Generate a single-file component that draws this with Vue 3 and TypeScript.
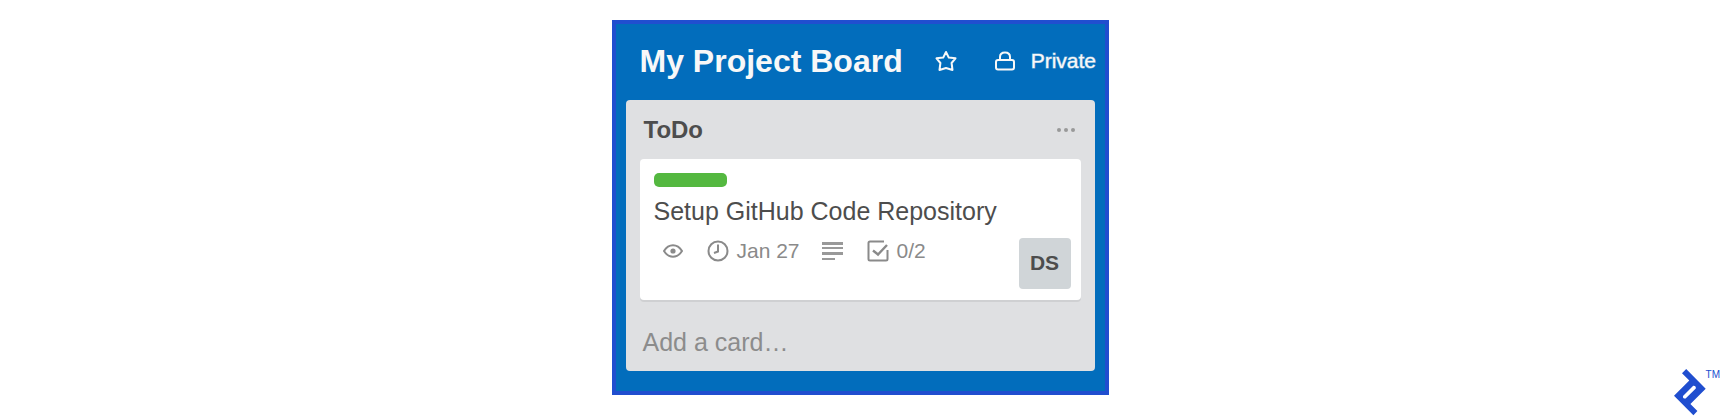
<script setup lang="ts">
interface Card {
  title: string
  due: string
  checklist: string
  member: string
}

const board = { title: 'My Project Board', visibility: 'Private' }
const list = { title: 'ToDo' }
const cards: Card[] = [
  { title: 'Setup GitHub Code Repository', due: 'Jan 27', checklist: '0/2', member: 'DS' },
]
</script>

<template>
  <main class="page">
    <section class="board">
      <header class="board-header">
        <h1 class="board-title">{{ board.title }}</h1>
        <button class="icon-button star" type="button" aria-label="Star board">
          <svg width="22" height="22" viewBox="0 0 22 22" fill="none" stroke="currentColor" stroke-width="2" stroke-linejoin="round">
            <path d="M11 2 L13.8 7.600 L20.500 8.300 L16.600 13 L17.500 20 L11 18 L4.500 20 L5.400 13 L1.500 8.300 L8.200 7.600 Z" />
          </svg>
        </button>
        <button class="icon-button privacy" type="button">
          <svg width="20" height="20" viewBox="0 0 20 20" fill="none" stroke="currentColor" stroke-width="2">
            <rect x="1" y="9" width="18" height="9.500" rx="2" />
            <path d="M5 9 V6 Q5 1.500 10 1.500 Q15 1.500 15 6 V9" />
          </svg>
          <span>{{ board.visibility }}</span>
        </button>
      </header>

      <section class="list">
        <header class="list-header">
          <h2 class="list-title">{{ list.title }}</h2>
          <button class="icon-button menu" type="button" aria-label="List actions">
            <svg width="18" height="4" viewBox="0 0 18 4" fill="currentColor">
              <rect x="0" y="0" width="4" height="4" rx="2" />
              <rect x="7" y="0" width="4" height="4" rx="2" />
              <rect x="14" y="0" width="4" height="4" rx="2" />
            </svg>
          </button>
        </header>

        <article v-for="card in cards" :key="card.title" class="card">
          <div class="label"></div>
          <h3 class="card-title">{{ card.title }}</h3>
          <div class="card-footer">
            <div class="badges">
              <span class="badge watch">
                <svg width="20" height="14" viewBox="0 0 20 14" fill="none" stroke="currentColor" stroke-width="2">
                  <path d="M1 7 Q4.500 1.300 10 1.300 Q15.500 1.300 19 7 Q15.500 12.700 10 12.700 Q4.500 12.700 1 7 Z" />
                  <circle cx="10" cy="7" r="2.600" fill="currentColor" stroke="none" />
                </svg>
              </span>
              <span class="badge due">
                <svg width="22" height="22" viewBox="0 0 22 22" fill="none" stroke="currentColor" stroke-width="2">
                  <circle cx="11" cy="11" r="9.500" />
                  <path d="M11 4.500 V11.500 L7 13" />
                </svg>
                {{ card.due }}
              </span>
              <span class="badge description">
                <svg width="21" height="20" viewBox="0 0 21 20" fill="currentColor">
                  <rect x="0" y="1" width="21" height="3" />
                  <rect x="0" y="6" width="21" height="2" />
                  <rect x="0" y="11" width="21" height="3" />
                  <rect x="0" y="17" width="13" height="2" />
                </svg>
              </span>
              <span class="badge checklist">
                <svg width="22" height="22" viewBox="0 0 22 22" fill="none" stroke="currentColor" stroke-width="2">
                  <path d="M17 1.500 H3 Q1.500 1.500 1.500 3 V19 Q1.500 20.500 3 20.500 H19 Q20.500 20.500 20.500 19 V10" />
                  <path d="M6 10.500 L11 14.500 L20 5" stroke-width="2.400" />
                </svg>
                {{ card.checklist }}
              </span>
            </div>
            <span class="member">{{ card.member }}</span>
          </div>
        </article>

        <button class="add-card" type="button">Add a card…</button>
      </section>
    </section>

    <div class="brand">
      <svg width="32" height="47" viewBox="0 0 32 47" aria-hidden="true">
        <path fill="#204ecf" fill-rule="evenodd" d="M12.200 0 L31.700 19.700 L16.400 35 L23.400 42 L19.400 46.300 L0 26.700 L15.300 11.600 L8 4.300 Z M19.200 16.800 L9 27 Q8.500 29.800 11.600 29.600 L21.800 19.400 Q22.200 16.600 19.200 16.800 Z" />
      </svg>
      <span class="trademark">TM</span>
    </div>
  </main>
</template>

<style>
body {
  margin: 0;
  background: #fff;
}
</style>

<style scoped>
.page {
  position: relative;
  box-sizing: border-box;
  min-height: 100vh;
  padding: 20px 0;
  display: flex;
  justify-content: center;
  align-items: flex-start;
  font-family: "Liberation Sans", Arial, sans-serif;
  color: #4d4d4d;
}

h1,
h2,
h3 {
  margin: 0;
}

button {
  padding: 0;
  border: 0;
  background: none;
  font: inherit;
  cursor: pointer;
}

svg {
  display: block;
  flex: none;
}

.board {
  box-sizing: border-box;
  width: 100%;
  max-width: 497px;
  padding: 0 10px 20px;
  border: 4px solid #204ecf;
  background: #026dbc;
}

.board-header {
  box-sizing: border-box;
  display: flex;
  align-items: center;
  height: 76px;
  padding: 0 0 2px 14px;
  color: #f8f8f8;
}

.board-title {
  font-size: 32px;
  line-height: 36px;
  white-space: nowrap;
}

.icon-button {
  display: flex;
  align-items: center;
  color: inherit;
}

.star {
  margin-left: 32px;
}

.privacy {
  gap: 16px;
  margin-left: 38px;
  font-size: 21px;
  line-height: 24px;
  -webkit-text-stroke: 1px rgba(248, 248, 248, 0.5);
}

.list {
  padding: 0 14px 13px;
  border-radius: 4px;
  background: #dfe0e2;
}

.list-header {
  display: flex;
  align-items: center;
  justify-content: space-between;
  height: 59px;
  padding: 0 6px 0 4px;
}

.list-title {
  font-size: 24px;
  line-height: 28px;
}

.menu {
  color: #999;
}

.card {
  padding: 14px 10px 11px 14px;
  border-radius: 4px;
  background: #fff;
  box-shadow: 0 2px 0 #cfd0d2;
}

.label {
  width: 73px;
  height: 14px;
  border-radius: 5px;
  background: #54b840;
}

.card-title {
  margin-top: 10px;
  font-size: 25px;
  font-weight: 400;
  line-height: 28px;
}

.card-footer {
  display: flex;
  justify-content: space-between;
  align-items: flex-start;
  margin-top: 13px;
}

.badges {
  display: flex;
  align-items: center;
  padding: 1px 0 0 9px;
  font-size: 21px;
  line-height: 24px;
  color: #8a8a8a;
}

.badge {
  display: flex;
  align-items: center;
  gap: 8px;
}

.due {
  margin-left: 24px;
}

.description {
  margin-left: 22px;
  color: #999;
}

.checklist {
  margin-left: 24px;
}

.member {
  width: 52px;
  height: 51px;
  border-radius: 4px;
  background: #d0d5d8;
  font-size: 21px;
  font-weight: 700;
  line-height: 50px;
  text-align: center;
}

.add-card {
  margin-top: 26px;
  padding-left: 3px;
  font-size: 25px;
  line-height: 32px;
  color: #8c8c8c;
}

.brand {
  position: absolute;
  right: 0;
  bottom: 0;
  display: flex;
  align-items: flex-start;
  color: #204ecf;
}

.trademark {
  font-size: 10px;
  line-height: 12px;
}
</style>
